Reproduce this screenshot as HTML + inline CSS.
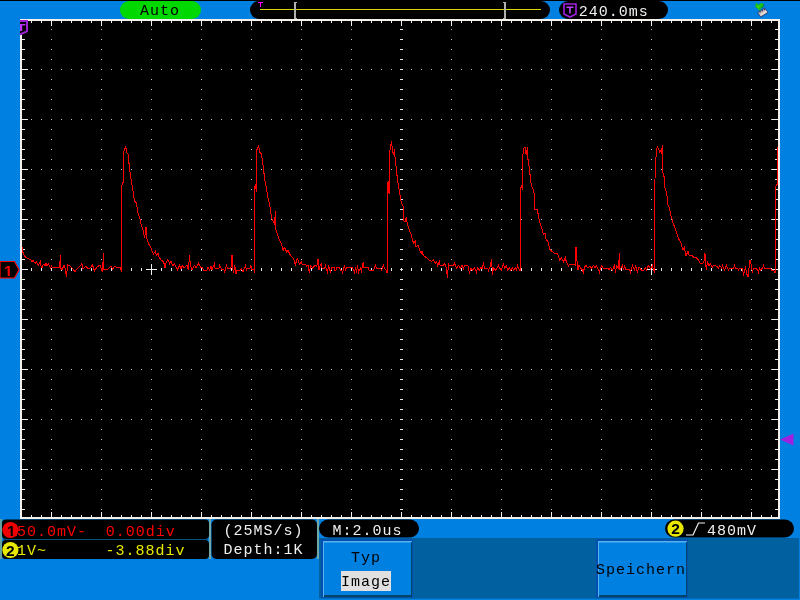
<!DOCTYPE html>
<html lang="de">
<head>
<meta charset="utf-8">
<title>Oszilloskop</title>
<style>
html,body{margin:0;padding:0;background:#0080e0;overflow:hidden;}
body{width:800px;height:600px;position:relative;}
svg{position:absolute;left:0;top:0;display:block;}
text{font-family:"Liberation Mono",monospace;font-size:15px;letter-spacing:1px;white-space:pre;will-change:transform;}
.b{font-family:"Liberation Sans",sans-serif;font-weight:bold;}
</style>
</head>
<body>
<svg width="800" height="600" viewBox="0 0 800 600">
<!-- background -->
<rect x="0" y="0" width="800" height="600" fill="#0080e0"/>
<rect x="0" y="0" width="800" height="1" fill="#000" shape-rendering="crispEdges"/>

<!-- top bar -->
<rect x="120" y="1" width="81" height="18" rx="9" ry="9" fill="#00d800"/>
<text x="140" y="15" fill="#000">Auto</text>
<rect x="250" y="1" width="300" height="18" rx="9" ry="9" fill="#000"/>
<g shape-rendering="crispEdges">
<rect x="260" y="9" width="281" height="1" fill="#d8d800"/>
<rect x="258" y="2" width="5" height="1" fill="#ff00ff"/>
<rect x="260" y="2" width="1" height="5" fill="#ff00ff"/>
<rect x="294" y="2" width="2" height="17" fill="#b0b0b0"/>
<rect x="296" y="2" width="1" height="1" fill="#b0b0b0"/>
<rect x="296" y="18" width="1" height="1" fill="#b0b0b0"/>
<rect x="504" y="2" width="2" height="17" fill="#b0b0b0"/>
<rect x="503" y="2" width="1" height="1" fill="#b0b0b0"/>
<rect x="503" y="18" width="1" height="1" fill="#b0b0b0"/>
</g>
<rect x="559" y="1" width="109" height="18" rx="9" ry="9" fill="#000"/>
<path d="M564 4 H576 V14 L570 17 L564 14 Z" fill="none" stroke="#a020e0" stroke-width="1.6"/>
<path d="M566.5 7.2 H573.5 M570 7.2 V13.5" fill="none" stroke="#c040ff" stroke-width="1.6"/>
<text x="578.7" y="16" fill="#f0f0f0">240.0ms</text>
<!-- usb icon -->
<g>
<path d="M757.6 12.6 L764.8 8 L768 12.6 L760.6 17 Z" fill="#c4bcb8" stroke="#203070" stroke-width="0.8"/>
<path d="M759.5 12.2 L765 9" stroke="#302070" stroke-width="1.2" stroke-dasharray="1.3 1.2"/>
<path d="M760.5 15 L766.5 11.3" stroke="#ece8e0" stroke-width="1.2"/>
<path d="M756 2.4 L758.2 4.8 L761 3 L763.6 3.8 L763.2 6.6 L760.8 8 L760.4 10.8 L758.6 10.2 L757.6 8.6 L755.4 7.6 L755.4 5 Z" fill="#18c018"/>
<path d="M757 5.5 L759.5 6 L758.5 8.5 Z" fill="#60e020"/>
<path d="M761.5 7.8 L763.4 6.4 L763.6 4" stroke="#107010" stroke-width="0.8" fill="none"/>
</g>

<!-- scope screen -->
<g shape-rendering="crispEdges">
<rect x="20" y="19" width="760" height="500" fill="#f4f0ec"/>
<rect x="22" y="21" width="756" height="496" fill="#000"/>
<!-- dotted grid: vertical lines -->
<g stroke="#bcbcbc" stroke-width="1" stroke-dasharray="1 9">
<line x1="51.5" y1="29" x2="51.5" y2="517"/>
<line x1="101.5" y1="29" x2="101.5" y2="517"/>
<line x1="151.5" y1="29" x2="151.5" y2="517"/>
<line x1="201.5" y1="29" x2="201.5" y2="517"/>
<line x1="251.5" y1="29" x2="251.5" y2="517"/>
<line x1="301.5" y1="29" x2="301.5" y2="517"/>
<line x1="351.5" y1="29" x2="351.5" y2="517"/>
<line x1="451.5" y1="29" x2="451.5" y2="517"/>
<line x1="501.5" y1="29" x2="501.5" y2="517"/>
<line x1="551.5" y1="29" x2="551.5" y2="517"/>
<line x1="601.5" y1="29" x2="601.5" y2="517"/>
<line x1="651.5" y1="29" x2="651.5" y2="517"/>
<line x1="701.5" y1="29" x2="701.5" y2="517"/>
<line x1="751.5" y1="29" x2="751.5" y2="517"/>
<line x1="31" y1="69.5" x2="778" y2="69.5"/>
<line x1="31" y1="119.5" x2="778" y2="119.5"/>
<line x1="31" y1="169.5" x2="778" y2="169.5"/>
<line x1="31" y1="219.5" x2="778" y2="219.5"/>
<line x1="31" y1="319.5" x2="778" y2="319.5"/>
<line x1="31" y1="369.5" x2="778" y2="369.5"/>
<line x1="31" y1="419.5" x2="778" y2="419.5"/>
<line x1="31" y1="469.5" x2="778" y2="469.5"/>
</g>
<!-- centre axes ticks -->
<line x1="31" y1="269.5" x2="778" y2="269.5" stroke="#e8e8e8" stroke-width="3" stroke-dasharray="1 9"/>
<line x1="401.5" y1="29" x2="401.5" y2="517" stroke="#e8e8e8" stroke-width="3" stroke-dasharray="1 9"/>
<!-- border ticks -->
<g stroke="#f4f0ec" stroke-dasharray="1 9">
<line x1="31" y1="22" x2="778" y2="22" stroke-width="2"/>
<line x1="31" y1="516" x2="778" y2="516" stroke-width="2"/>
<line x1="23.5" y1="29" x2="23.5" y2="517" stroke-width="3"/>
<line x1="776.5" y1="29" x2="776.5" y2="517" stroke-width="3"/>
</g>
<g stroke="#f4f0ec" stroke-dasharray="1 49">
<line x1="51" y1="23.5" x2="778" y2="23.5" stroke-width="5"/>
<line x1="51" y1="514.5" x2="778" y2="514.5" stroke-width="5"/>
<line x1="25" y1="69" x2="25" y2="517" stroke-width="6"/>
<line x1="775" y1="69" x2="775" y2="517" stroke-width="6"/>
</g>
<!-- cursors -->
<g fill="#f0f0f0">
<rect x="146" y="269" width="11" height="1"/><rect x="151" y="264" width="1" height="11"/>
<rect x="646" y="269" width="11" height="1"/><rect x="651" y="264" width="1" height="11"/>
</g>
<!-- waveform -->
<polyline fill="none" stroke="#ff0000" stroke-width="1" points="22.5,247.0 22.5,251.0 23.5,254.0 24.5,256.0 25.5,257.0 27.0,258.0 28.5,258.5 29.5,259.5 31.0,260.0 32.0,261.5 33.0,260.5 34.0,262.0 35.5,263.0 36.5,262.0 37.5,264.0 38.5,265.0 39.5,263.5 40.5,261.5 41.0,266.0 42.0,267.5 43.0,265.0 44.0,264.0 45.0,266.0 46.0,263.5 47.0,265.5 48.5,264.0 49.5,266.5 50.5,268.0 51.5,266.0 52.5,267.5 58.0,267.5 59.5,267.5 60.5,255.5 60.5,268.0 62.0,270.0 64.0,265.0 65.0,268.0 66.5,276.5 67.5,265.0 69.5,265.5 72.0,268.0 75.0,271.5 78.0,268.0 80.0,266.0 82.0,263.7 83.0,269.0 86.0,266.0 88.0,269.0 90.0,268.0 92.5,265.0 94.5,271.0 97.0,267.0 100.0,265.0 101.0,268.0 102.5,272.0 103.5,253.2 103.5,270.0 108.0,269.0 111.0,266.0 112.5,269.0 115.0,266.0 117.0,268.0 120.0,267.0 121.5,272.0 121.5,187.0 122.5,183.0 123.5,182.7 123.5,153.0 124.5,149.0 125.5,147.0 126.5,150.0 127.0,153.0 128.0,154.0 128.7,161.0 129.7,169.0 130.6,177.0 131.7,183.0 132.7,189.0 133.7,195.7 134.6,201.0 136.3,203.0 137.0,206.7 138.3,215.3 139.7,217.3 141.0,224.0 143.0,230.0 144.7,238.0 146.0,227.3 147.0,238.7 148.3,243.3 151.0,248.0 153.3,254.0 155.4,251.3 156.3,255.3 158.0,253.3 159.0,256.7 161.0,260.0 163.7,262.0 165.0,268.0 165.7,263.3 167.7,259.3 169.7,264.0 171.0,261.3 173.0,266.0 174.3,263.7 177.3,270.0 179.4,265.3 181.0,268.7 182.3,266.0 184.3,268.0 187.0,265.3 188.5,270.0 189.5,255.0 190.4,265.5 192.0,270.0 194.5,265.5 196.0,268.0 198.5,263.5 200.5,267.0 202.5,268.0 203.5,270.0 207.0,270.0 208.0,267.5 209.5,270.0 211.0,266.0 212.0,269.5 214.5,263.5 215.0,268.0 219.0,268.0 219.5,265.5 221.5,269.0 224.0,270.0 224.5,272.5 226.5,265.5 227.5,268.0 230.5,268.0 231.5,266.0 232.0,255.0 233.0,270.0 233.5,272.5 234.8,265.5 236.0,274.0 237.0,270.0 240.0,270.0 241.5,268.5 243.0,272.0 245.5,265.5 246.5,270.0 248.0,268.0 250.0,268.0 251.0,265.5 251.5,269.5 254.0,270.0 254.5,272.5 254.5,187.0 255.5,185.0 256.5,192.3 256.5,151.0 257.3,148.0 257.6,150.0 258.4,145.0 259.7,152.3 261.3,153.7 262.4,159.7 263.7,171.0 264.7,179.0 266.4,188.3 268.0,197.7 269.6,204.3 270.9,213.7 272.0,218.7 273.3,222.0 274.6,224.0 275.3,211.3 275.5,228.7 277.3,234.0 279.3,240.0 281.7,244.0 283.0,250.4 284.7,247.3 286.7,252.3 288.0,250.4 290.7,256.0 293.3,258.0 295.3,264.7 297.3,258.7 299.6,264.0 301.3,262.0 302.0,264.0 305.3,264.0 306.7,266.0 308.0,265.3 309.3,272.7 310.7,265.6 312.7,268.0 315.3,265.3 316.7,266.4 318.0,259.3 319.0,270.0 320.7,264.0 321.5,263.5 322.0,268.0 324.5,268.0 325.5,265.5 326.5,270.0 327.5,272.5 328.5,265.5 329.5,269.5 330.5,272.0 331.5,267.5 334.0,267.5 334.5,270.0 336.0,270.0 336.5,267.5 339.5,267.5 340.5,270.0 341.5,270.0 342.5,272.5 344.5,265.5 345.5,270.0 346.5,267.5 352.5,267.5 353.5,270.0 354.5,272.5 355.5,267.0 356.5,272.5 357.5,265.5 358.5,272.5 359.5,270.0 360.5,268.0 361.5,272.5 362.5,263.5 363.5,263.0 364.0,267.5 368.5,267.5 369.0,270.0 373.5,270.0 375.5,265.5 376.5,268.0 380.5,268.0 381.5,270.0 383.5,265.5 384.5,268.0 386.0,270.0 386.5,272.5 387.5,272.5 387.5,183.0 388.5,181.0 388.5,192.3 389.5,194.3 389.5,155.0 390.5,146.0 391.5,143.0 392.5,148.0 393.0,152.5 393.6,153.7 394.6,149.0 394.9,156.3 395.6,162.3 396.7,173.0 397.7,181.0 398.7,187.7 399.6,192.3 400.7,199.7 402.0,204.3 403.3,206.7 403.5,220.0 404.9,222.0 406.4,217.3 407.3,224.0 409.3,230.0 411.0,234.0 412.4,240.0 413.7,243.3 415.3,241.3 416.0,246.7 418.0,245.3 419.6,250.0 421.3,253.3 422.0,251.3 423.3,255.3 426.0,257.3 428.7,259.7 431.3,261.3 433.3,260.0 435.3,263.3 436.7,262.0 437.7,266.0 439.3,261.6 440.0,265.3 443.3,265.6 444.7,263.7 445.7,265.3 446.7,272.0 447.5,278.0 448.4,263.3 449.3,265.6 453.3,265.6 454.5,263.5 455.5,265.5 456.5,268.5 458.5,265.5 460.5,268.0 462.0,265.5 463.5,268.5 464.5,265.5 468.0,265.5 468.5,270.0 469.5,272.5 471.0,268.0 472.5,270.0 474.5,267.5 476.5,272.5 477.5,267.5 479.5,270.0 481.0,267.5 482.0,268.5 483.5,263.5 484.5,268.0 487.5,268.0 488.5,270.5 490.0,267.0 491.5,259.0 492.5,274.5 493.5,268.0 495.5,270.0 497.5,267.5 498.5,265.5 499.5,268.0 501.5,270.0 503.5,263.5 504.5,268.5 506.5,265.5 507.5,270.0 509.5,268.0 510.5,270.0 512.5,268.0 513.5,270.0 515.5,267.5 516.5,270.0 517.5,265.5 519.5,270.5 520.5,270.5 520.5,187.7 521.5,185.7 522.5,190.3 522.5,159.0 523.5,148.3 524.5,147.3 525.2,147.3 525.7,152.3 526.4,155.0 527.4,147.3 527.6,157.0 528.6,163.0 529.7,171.0 530.6,181.0 531.7,186.3 533.0,189.0 534.2,193.7 534.4,209.0 537.3,209.5 538.7,217.3 540.0,223.3 542.0,228.7 543.3,234.7 545.0,233.3 546.0,238.7 548.0,242.0 549.7,249.3 551.3,250.7 552.7,252.0 555.3,254.0 557.3,253.3 559.6,260.0 561.3,257.6 563.3,262.0 565.3,257.6 566.3,261.6 568.4,266.0 569.3,264.0 574.0,264.0 575.3,265.3 576.0,247.3 577.0,261.3 578.0,270.0 579.0,265.3 580.7,268.0 582.0,269.3 583.3,272.3 584.7,266.7 586.0,265.6 588.0,268.0 590.0,266.0 591.5,268.0 593.5,265.5 595.0,268.0 596.5,265.5 598.5,270.0 599.5,272.5 600.5,268.0 601.5,265.5 603.0,268.0 608.0,268.0 609.0,270.0 610.5,267.5 612.5,270.0 613.5,267.5 614.5,265.5 615.5,272.5 616.5,265.5 618.5,268.0 619.4,253.0 620.0,270.0 621.5,267.5 622.5,265.5 623.5,270.0 624.5,265.5 625.5,269.5 629.5,269.5 630.5,272.5 631.5,268.0 632.5,265.5 633.5,268.0 634.5,270.0 635.5,265.5 637.5,272.5 638.5,267.5 640.0,268.0 641.5,270.0 644.0,270.0 645.5,267.5 646.5,270.0 648.5,265.5 650.5,269.0 652.5,265.5 653.5,270.0 654.5,272.5 654.5,193.0 655.5,165.0 656.5,149.0 657.5,147.0 658.7,149.0 659.7,152.3 660.7,150.3 661.3,154.3 662.4,145.0 662.5,172.3 663.3,173.7 664.3,177.7 664.7,187.0 666.0,191.0 667.3,197.7 667.7,204.3 669.2,207.5 671.0,216.0 673.0,222.7 675.7,230.0 678.3,238.0 681.0,243.3 683.0,250.0 684.3,247.3 686.0,256.0 688.0,251.3 689.0,255.3 692.3,255.7 693.7,257.6 696.3,257.6 698.3,260.0 700.3,263.7 702.3,263.7 704.0,261.3 705.0,253.3 705.7,266.7 706.6,268.7 707.4,261.3 709.0,266.0 710.3,263.3 712.3,267.3 713.7,265.3 716.3,266.0 718.3,268.0 719.7,265.6 721.7,268.0 722.5,265.5 724.5,270.0 726.5,265.5 728.5,270.0 730.0,268.0 733.5,268.0 734.5,265.5 735.5,268.0 737.5,268.0 738.5,270.0 739.5,268.0 742.0,268.0 743.5,274.5 745.5,268.0 747.5,276.5 748.5,276.0 749.5,261.0 750.5,260.5 751.5,268.0 752.5,272.5 753.5,268.0 756.0,268.0 757.5,270.0 758.5,272.5 759.5,268.0 760.5,270.0 762.5,268.0 763.5,265.5 764.5,268.0 770.5,268.0 771.5,270.0 773.5,270.0 774.5,272.5 775.5,272.5 775.5,187.3 776.5,185.0 777.5,184.0 777.5,147.3"/>
</g>

<!-- trigger T marker top-left (clipped) -->
<g>
<path d="M20 20 H28 V31.8 L20 35.3 Z" fill="#000"/>
<path d="M20 21 H27 V31.4 L20 34.4" fill="none" stroke="#a020d8" stroke-width="2"/>
<path d="M20 24.7 H25.4" fill="none" stroke="#c030ff" stroke-width="1.4"/>
<rect x="20" y="24" width="2.2" height="7" fill="#c030ff"/>
</g>
<!-- channel 1 marker -->
<path d="M0 261.5 H14.5 L19 269.75 L14.5 278 H0 Z" fill="#000" stroke="#ff0000" stroke-width="1.2"/>
<text x="4" y="275.6" fill="#ff0000" style="font-family:'Liberation Sans',sans-serif;font-weight:bold;font-size:15.5px;letter-spacing:0">1</text>
<rect x="3" y="273.5" width="4.7" height="2.6" fill="#000"/><rect x="9.9" y="273.5" width="4.5" height="2.6" fill="#000"/>
<!-- trigger level marker -->
<path d="M780 439.5 L793.5 433.5 V445.5 Z" fill="#a020e0"/>

<!-- bottom status -->
<rect x="0" y="519" width="2" height="40" fill="#60a0a0" shape-rendering="crispEdges"/>
<rect x="3" y="539" width="205" height="1" fill="#005080" shape-rendering="crispEdges"/>
<rect x="2" y="519.5" width="207" height="19.5" rx="4" ry="4" fill="#000"/>
<rect x="2" y="540" width="207" height="19" rx="4" ry="4" fill="#000"/>
<rect x="209" y="519" width="2" height="40" fill="#70a8a8" shape-rendering="crispEdges"/>
<rect x="211.5" y="519.5" width="105.5" height="39.5" rx="5" ry="5" fill="#000"/>
<rect x="317" y="519" width="2" height="40" fill="#70a8a8" shape-rendering="crispEdges"/>
<rect x="319" y="519.5" width="100" height="18" rx="9" ry="9" fill="#000"/>
<rect x="665" y="519.5" width="129" height="18" rx="9" ry="9" fill="#000"/>

<circle cx="10.4" cy="530" r="8.1" fill="#f00000"/>
<text x="7" y="535.6" fill="#000" style="font-family:'Liberation Sans',sans-serif;font-weight:bold;font-size:15.5px;letter-spacing:0">1</text>
<rect x="6.5" y="533.5" width="4.2" height="2.6" fill="#f00000"/><rect x="12.9" y="533.5" width="4" height="2.6" fill="#f00000"/>
<text x="17" y="536" fill="#ff0000">50.0mV-</text>
<text x="105.7" y="536" fill="#ff0000">0.00div</text>
<circle cx="10.4" cy="550" r="8.1" fill="#e8e800"/>
<text x="6.1" y="555.5" fill="#000" style="font-family:'Liberation Sans',sans-serif;font-weight:bold;font-size:15.5px;letter-spacing:0">2</text>
<text x="17" y="555.3" fill="#e8e800">1V~</text>
<text x="105.5" y="555.3" fill="#e8e800">-3.88div</text>

<text x="223.5" y="535" fill="#f0f0f0">(25MS/s)</text>
<text x="223.5" y="554.3" fill="#f0f0f0">Depth:1K</text>
<text x="332.5" y="535" fill="#f0f0f0">M:2.0us</text>

<circle cx="675.5" cy="528.7" r="8.1" fill="#e8e800"/>
<text x="671.2" y="534.2" fill="#000" style="font-family:'Liberation Sans',sans-serif;font-weight:bold;font-size:15.5px;letter-spacing:0">2</text>
<path d="M686 535 H693 L698.5 523 H705" fill="none" stroke="#f0f0f0" stroke-width="1.2"/>
<text x="707" y="535" fill="#f0f0f0">480mV</text>

<!-- menu strip -->
<g shape-rendering="crispEdges">
<rect x="319" y="538" width="480" height="60" fill="#0060a0"/>
<rect x="319" y="598" width="480" height="1" fill="#0060a0" opacity="0.6"/>
<!-- button 1 -->
<rect x="321" y="539" width="92" height="59" fill="#0050b0"/>
<rect x="323" y="541" width="89" height="56" fill="#58b0f0"/>
<rect x="324" y="542" width="88" height="55" fill="#004468"/>
<rect x="324" y="542" width="87" height="53" fill="#0080e0"/>
<rect x="324" y="542" width="87" height="1" fill="#58b0f0" opacity="0.5"/>
<rect x="341" y="571" width="50" height="20" fill="#e0e0e0"/>
<!-- button 2 -->
<rect x="596" y="539" width="92" height="59" fill="#0050b0"/>
<rect x="598" y="541" width="89" height="56" fill="#58b0f0"/>
<rect x="599" y="542" width="88" height="55" fill="#004468"/>
<rect x="599" y="542" width="87" height="53" fill="#0080e0"/>
<rect x="599" y="542" width="87" height="1" fill="#58b0f0" opacity="0.5"/>
</g>
<text x="351" y="562" fill="#000">Typ</text>
<text x="341" y="586" fill="#000">Image</text>
<text x="596" y="574" fill="#000">Speichern</text>
</svg>
</body>
</html>
